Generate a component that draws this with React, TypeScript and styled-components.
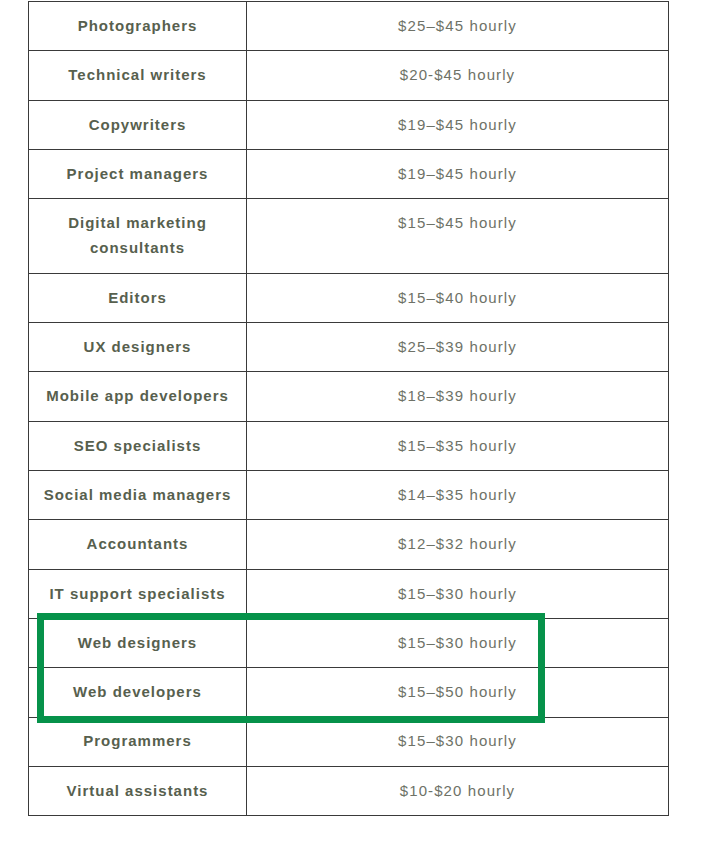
import React from "react";
import styled, { createGlobalStyle } from "styled-components";

const GlobalStyle = createGlobalStyle`
  html, body {
    margin: 0;
    padding: 0;
    background: #ffffff;
  }
  body {
    font-family: "Liberation Sans", Arial, sans-serif;
  }
`;

const Page = styled.div`
  padding: 1px 0 0 28px;
  width: 711px;
  height: 842px;
  box-sizing: border-box;
`;

const Frame = styled.div`
  position: relative;
  width: 641px;
`;

const RateTable = styled.table`
  width: 641px;
  border-collapse: collapse;
  table-layout: fixed;
`;

const RoleCol = styled.col`
  width: 218px;
`;

const Cell = styled.td<{ $role?: boolean }>`
  border: 1px solid #3a3a3a;
  padding: 10.9px 12px 12.45px;
  vertical-align: top;
  text-align: center;
  line-height: 25px;
  font-size: 15px;
  letter-spacing: ${(p) => (p.$role ? "1px" : "1.1px")};
  font-weight: ${(p) => (p.$role ? 700 : 400)};
  color: ${(p) => (p.$role ? "#57604e" : "#6e7267")};
`;

const Highlight = styled.div`
  position: absolute;
  left: 9px;
  top: 612px;
  width: 508px;
  height: 110px;
  box-sizing: border-box;
  border: 7px solid #06924a;
  pointer-events: none;
`;

const rates: [string, string][] = [
  ["Photographers", "$25–$45 hourly"],
  ["Technical writers", "$20-$45 hourly"],
  ["Copywriters", "$19–$45 hourly"],
  ["Project managers", "$19–$45 hourly"],
  ["Digital marketing consultants", "$15–$45 hourly"],
  ["Editors", "$15–$40 hourly"],
  ["UX designers", "$25–$39 hourly"],
  ["Mobile app developers", "$18–$39 hourly"],
  ["SEO specialists", "$15–$35 hourly"],
  ["Social media managers", "$14–$35 hourly"],
  ["Accountants", "$12–$32 hourly"],
  ["IT support specialists", "$15–$30 hourly"],
  ["Web designers", "$15–$30 hourly"],
  ["Web developers", "$15–$50 hourly"],
  ["Programmers", "$15–$30 hourly"],
  ["Virtual assistants", "$10-$20 hourly"],
];

const App = () => {
  return (
    <Page>
      <GlobalStyle />
      <Frame>
        <RateTable>
          <colgroup>
            <RoleCol />
            <col />
          </colgroup>
          <tbody>
            {rates.map(([role, rate]) => (
              <tr key={role}>
                <Cell $role>{role}</Cell>
                <Cell>{rate}</Cell>
              </tr>
            ))}
          </tbody>
        </RateTable>
        <Highlight />
      </Frame>
    </Page>
  );
};

export default App;
